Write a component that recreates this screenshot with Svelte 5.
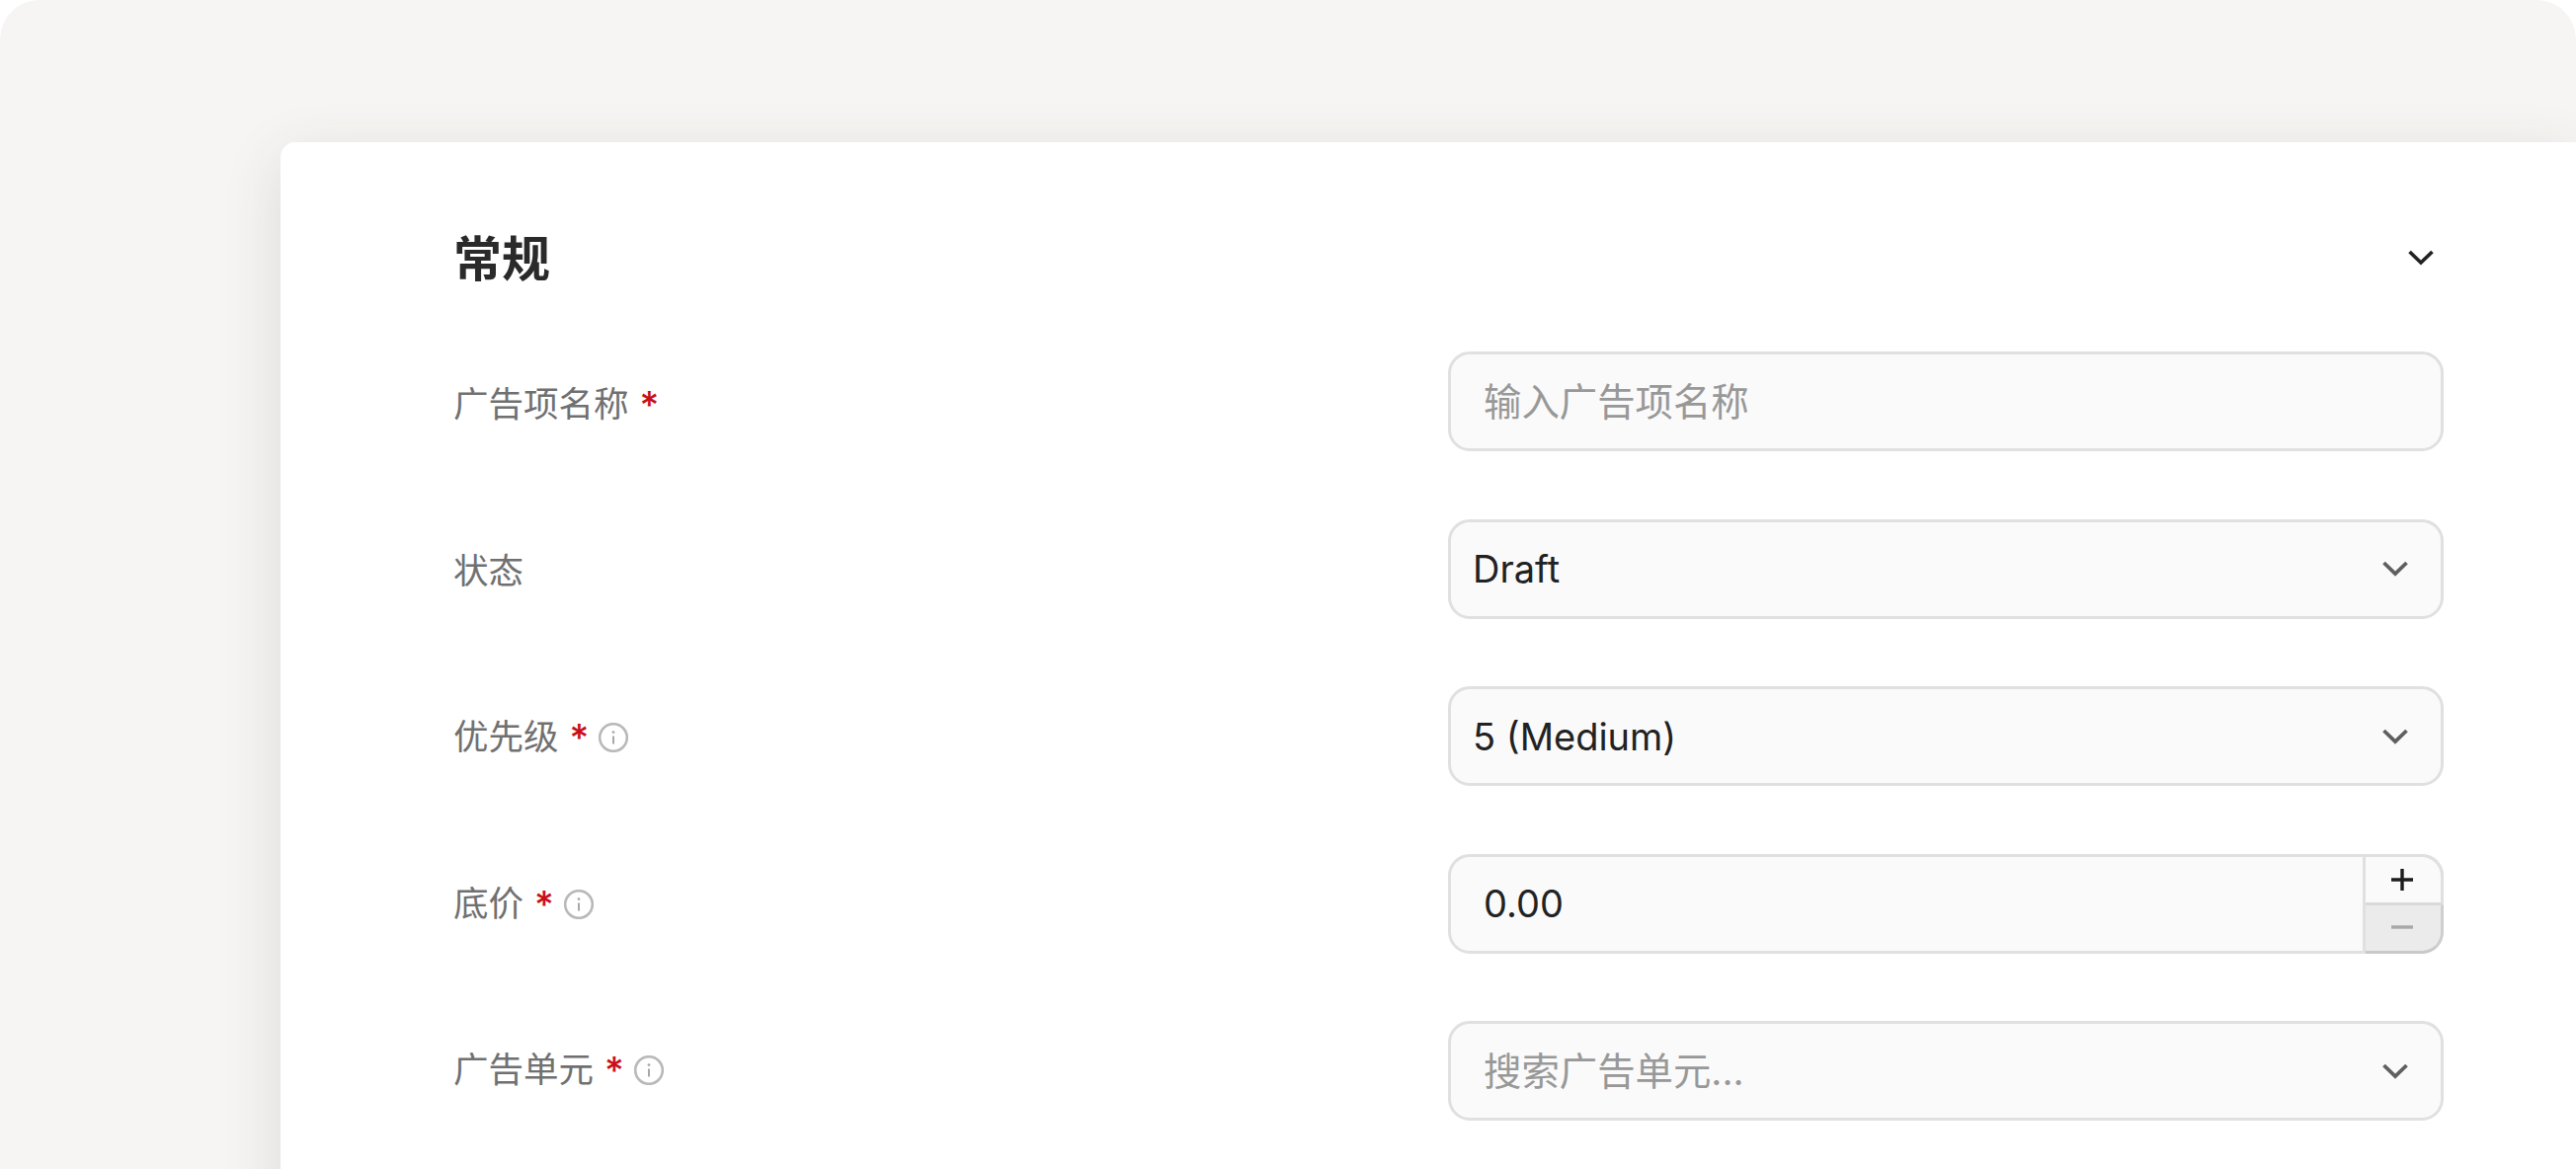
<script>
  const rows = [
    { label: '广告项名称', required: true, kind: 'text', placeholder: '输入广告项名称' },
    { label: '状态', kind: 'select', value: 'Draft' },
    { label: '优先级', required: true, info: true, kind: 'select', value: '5 (Medium)' },
    { label: '底价', required: true, info: true, kind: 'number', value: '0.00' },
    { label: '广告单元', required: true, info: true, kind: 'search', placeholder: '搜索广告单元...' }
  ];
</script>

<div class="frame">
  <section class="panel">
    <header class="head">
      <h2>常规</h2>
      <svg class="collapse" viewBox="0 0 26 16" width="26" height="16" fill="none" stroke="#222" stroke-width="3.6">
        <path d="M1.5 2 13 13 24.5 2" />
      </svg>
    </header>

    <div class="form">
      <div class="labels">
        {#each rows as row}
          <div class="label">
            <span>{row.label}</span>
            {#if row.required}<span class="star">*</span>{/if}
            {#if row.info}
              <svg class="info" viewBox="0 0 30 30" width="30" height="30" fill="none">
                <circle cx="15" cy="15" r="13.8" stroke="#b9b9b9" stroke-width="2.6" />
                <path d="M15 13.5v8" stroke="#a8a8a8" stroke-width="2" />
                <circle cx="15" cy="9.6" r="1.4" fill="#a8a8a8" />
              </svg>
            {/if}
          </div>
        {/each}
      </div>

      <div class="fields">
        {#each rows as row}
          <div class="control">
            {#if row.kind === 'text'}
              <span class="text placeholder">{row.placeholder}</span>
            {:else if row.kind === 'number'}
              <span class="text">{row.value}</span>
              <div class="stepper">
                <div class="step up">
                  <svg viewBox="0 0 24 24" width="24" height="24" stroke="#1c1c1c" stroke-width="3.4"><path d="M1 12h22M12 1v22" /></svg>
                </div>
                <div class="step down">
                  <svg viewBox="0 0 24 24" width="24" height="24" stroke="#a9a9a9" stroke-width="3.4"><path d="M1 12h22" /></svg>
                </div>
              </div>
            {:else}
              <span class="text" class:placeholder={row.kind === 'search'} class:value={row.kind === 'select'}>
                {row.value ?? row.placeholder}
              </span>
              <svg class="arrow" viewBox="0 0 26 16" width="26" height="16" fill="none" stroke="#5f5f5f" stroke-width="3.8">
                <path d="M1.5 2 13 13 24.5 2" />
              </svg>
            {/if}
          </div>
        {/each}
      </div>
    </div>
  </section>
</div>

<style>
  :global(body) {
    background: #fff;
    overflow: hidden;
  }

  .frame {
    height: 1184px;
    box-sizing: border-box;
    padding: 144px 0 0 284px;
    background: #f6f5f3;
    border-radius: 40px 40px 0 0;
    overflow: hidden;
    font-family: Inter, "Noto Sans CJK SC", sans-serif;
  }

  .panel {
    height: 1100px;
    box-sizing: border-box;
    padding: 0 134px 0 175px;
    background: #fff;
    border-radius: 15px 0 0 0;
    box-shadow: 0 16px 60px rgba(60, 56, 48, 0.14);
  }

  .head {
    height: 212px;
    padding: 16px 10px 0 0;
    display: flex;
    align-items: center;
    justify-content: space-between;
    box-sizing: border-box;
  }

  h2 {
    margin: 0;
    font-size: 49px;
    font-weight: 700;
    color: #2a2a2a;
  }

  .collapse {
    display: block;
    margin-top: 6px;
  }

  .form {
    display: grid;
    grid-template-columns: 1007px 1008px;
  }

  .labels {
    display: flex;
    flex-direction: column;
    gap: 122.5px;
    padding-top: 31px;
  }

  .fields {
    display: flex;
    flex-direction: column;
    gap: 68.5px;
  }

  .label {
    display: flex;
    align-items: center;
    height: 46px;
    font-size: 35.5px;
    line-height: 46px;
    color: #707070;
  }

  .star {
    margin-left: 11px;
    color: #c90f1a;
    font-size: 38px;
    font-weight: 500;
  }

  .info {
    margin-left: 10px;
  }

  .control {
    position: relative;
    flex: none;
    height: 101px;
    box-sizing: border-box;
    display: flex;
    align-items: center;
    justify-content: space-between;
    padding: 0 33px 0 33px;
    background: #fafafa;
    border: 3px solid #e0e0e0;
    border-radius: 22px;
    font-size: 38px;
    color: #222;
  }

  .text.value {
    margin-left: -11px;
  }

  .placeholder {
    margin-bottom: 6px;
    font-size: 38.4px;
    color: #989898;
  }

  .arrow {
    display: block;
  }

  .stepper {
    position: absolute;
    top: -3px;
    right: -3px;
    bottom: -3px;
    width: 79px;
    display: grid;
    grid-template-rows: 52px 1fr;
    border-left: 3px solid #e0e0e0;
  }

  .step {
    display: flex;
    align-items: center;
    justify-content: center;
    box-sizing: border-box;
    padding-right: 2px;
    border-right: 3px solid #e0e0e0;
  }

  .up {
    border-top: 3px solid #e0e0e0;
    border-bottom: 3px solid #d9d9d9;
    border-top-right-radius: 22px;
  }

  .down {
    padding-bottom: 2px;
    background: #ebebeb;
    border-right-color: #cfcfcf;
    border-bottom: 3px solid #c9c9c9;
    border-bottom-right-radius: 22px;
  }
</style>
